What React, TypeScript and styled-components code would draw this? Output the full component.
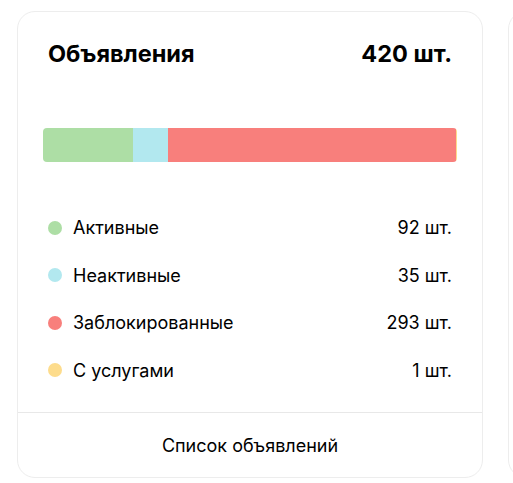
import React from 'react'
import styled, { createGlobalStyle } from 'styled-components'

const GlobalStyle = createGlobalStyle`
    body {
        margin: 0;
        background: #fff;
        font-family: 'Inter', 'Noto Sans', sans-serif;
        color: #000;
    }
`

type Item = {
    label: string,
    count: number,
    color: string,
};

const items: Item[] = [
    { label: 'Активные', count: 92, color: '#addea5' },
    { label: 'Неактивные', count: 35, color: '#b2e8ef' },
    { label: 'Заблокированные', count: 293, color: '#f87f7c' },
    { label: 'С услугами', count: 1, color: '#fddc8c' },
];

const App = () => {
    return (
        <>
            <GlobalStyle />
            <Page>
                <Card>
                    <Body>
                        <Header>
                            <Title>Объявления</Title>
                            <Title>420 шт.</Title>
                        </Header>
                        <Bar>
                            {items.map(i => (
                                <Segment key={i.label} $color={i.color} style={{ flexGrow: i.count }} />
                            ))}
                        </Bar>
                        <Legend>
                            {items.map(i => (
                                <Row key={i.label}>
                                    <Dot $color={i.color} />
                                    <Label>{i.label}</Label>
                                    <Count>{i.count} шт.</Count>
                                </Row>
                            ))}
                        </Legend>
                    </Body>
                    <Footer>Список объявлений</Footer>
                </Card>
                <Card />
            </Page>
        </>
    )
}

// Page

const Page = styled.div`
    display: flex;
    gap: 25px;
    padding: 11px 0 0 17px;
    height: 483px;
    box-sizing: border-box;
    overflow: hidden;
`

const Card = styled.div`
    flex: none;
    width: 466px;
    height: 467px;
    box-sizing: border-box;
    border: 1px solid #ededed;
    border-radius: 18px;
    display: flex;
    flex-direction: column;
    background: #fff;
`

const Body = styled.div`
    flex: 1;
    padding: 27px 30px 0 30px;
`

// Header

const Header = styled.div`
    display: flex;
    justify-content: space-between;
    align-items: center;
    height: 30px;
`

const Title = styled.span`
    font-size: 23.5px;
    font-weight: 700;
    line-height: 30px;
`

// Bar

const Bar = styled.div`
    display: flex;
    height: 34px;
    margin: 59px -5px 0 -5px;
    border-radius: 4px;
    overflow: hidden;
`

const Segment = styled.div<{ $color: string }>`
    flex-basis: 0;
    background: ${p => p.$color};
`

// Legend

const Legend = styled.div`
    margin-top: 42px;
    display: flex;
    flex-direction: column;
`

const Row = styled.div`
    display: flex;
    align-items: center;
    height: 47.5px;
    font-size: 18px;
`

const Dot = styled.span<{ $color: string }>`
    width: 14px;
    height: 14px;
    border-radius: 50%;
    background: ${p => p.$color};
    margin-right: 11px;
`

const Label = styled.span`
    flex: 1;
`

const Count = styled.span``

// Footer

const Footer = styled.div`
    height: 64px;
    border-top: 1px solid #e8e8e8;
    display: flex;
    align-items: center;
    justify-content: center;
    font-size: 18px;
`

export default App
